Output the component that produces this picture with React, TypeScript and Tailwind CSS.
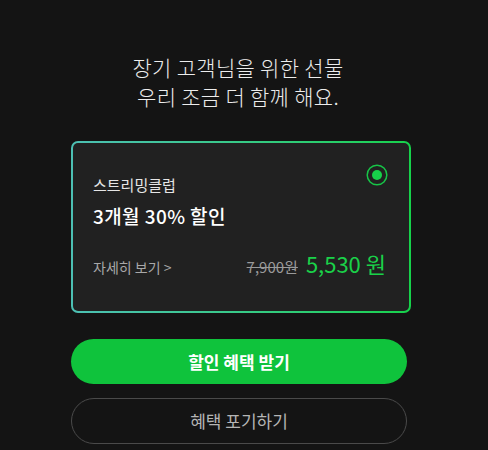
const font = { fontFamily: '"Noto Sans CJK KR", "Noto Sans", sans-serif' };

function Radio() {
  return (
    <svg width="22" height="22" viewBox="0 0 22 22" className="absolute top-[21px] right-[21px]">
      <circle cx="11" cy="11" r="9.8" fill="none" stroke="#17c447" strokeWidth="1.5" />
      <circle cx="11" cy="11" r="5" fill="#17d14a" />
    </svg>
  );
}

export default function App() {
  return (
    <div className="min-h-[450px] w-full bg-[#141414] pl-[71px] pt-[53px]" style={font}>
      {/* Heading */}
      <div className="w-[334px] text-center text-[21px] leading-[29px] font-light tracking-[0.3px] text-[#ededed]">
        <p>장기 고객님을 위한 선물</p>
        <p>우리 조금 더 함께 해요.</p>
      </div>

      {/* Offer card */}
      <div className="mt-[30px] w-[340px] rounded-[7px] bg-gradient-to-r from-[#4dc0b4] to-[#16d24a] p-[2px]">
        <div className="relative h-[168px] rounded-[5px] bg-[#212121] px-[20px] pt-[31px]">
          <Radio />
          <p className="text-[15px] leading-[22px] text-[#e6e6e6]">스트리밍클럽</p>
          <p className="mt-[6px] text-[19px] leading-[27px] tracking-[0.4px] font-medium text-white">3개월 30% 할인</p>
          <div className="mt-[20px] flex items-baseline justify-between pr-[3px]">
            <span className="text-[14px] text-[#a8a8a8]">자세히 보기 &gt;</span>
            <div className="flex items-baseline gap-[8px]">
              <span className="text-[15px] text-[#9a9a9a] line-through">7,900원</span>
              <span className="text-[22px] leading-[28px] text-[#1ad149]">5,530 원</span>
            </div>
          </div>
        </div>
      </div>

      {/* Actions */}
      <button className="mt-[26px] flex h-[45px] w-[336px] items-center justify-center rounded-full bg-[#0fc33c] text-[17px] font-bold text-white">
        할인 혜택 받기
      </button>
      <button className="mt-[14px] flex h-[46px] w-[336px] items-center justify-center rounded-full border border-[#4a4a4a] text-[17px] text-[#b5b5b5]">
        혜택 포기하기
      </button>
    </div>
  );
}
